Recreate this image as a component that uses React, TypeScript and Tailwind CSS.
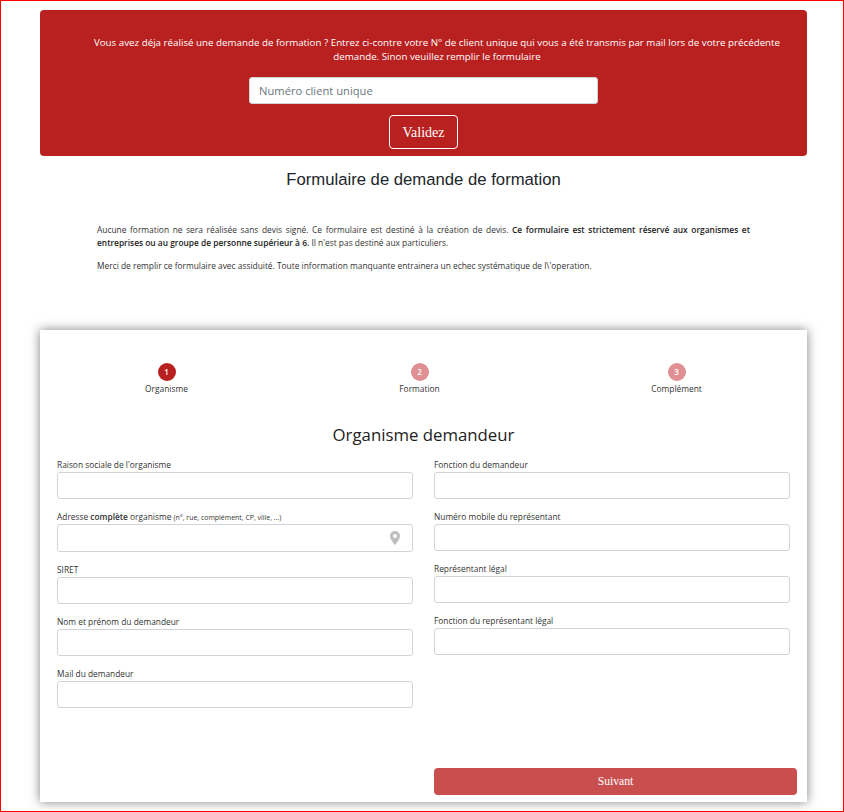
const OPEN = "font-['Open_Sans',sans-serif]"

function Field({ label, pin, tall }: { label: React.ReactNode; pin?: boolean; tall?: boolean }) {
  return (
    <div className="flex flex-col">
      <label className="block h-[14px] text-[8.350px] leading-[14px] text-[#333]">{label}</label>
      <div className="relative">
        <input className={`block w-full rounded-[3px] border border-[#ced4da] bg-white ${tall ? 'h-[28px]' : 'h-[27px]'}`} />
        {pin && (
          <svg viewBox="0 0 24 24" className="absolute right-[11px] top-[7px] h-[14px] w-[14px] text-[#bdbdbd]" fill="currentColor">
            <path fillRule="evenodd" d="M12 0C7 0 3.5 3.8 3.5 8.5 3.5 14.500 12 24 12 24s8.500-9.500 8.500-15.500C20.500 3.800 17 0 12 0zm0 12a3.500 3.500 0 1 1 0-7 3.500 3.500 0 0 1 0 7z" />
          </svg>
        )}
      </div>
    </div>
  )
}

function Step({ n, label, active }: { n: number; label: string; active?: boolean }) {
  return (
    <div className="flex flex-col items-center">
      <div className={`flex h-[18px] w-[18px] items-center justify-center rounded-full text-[8px] font-semibold text-white ${active ? 'bg-[#b92020]' : 'bg-[#e09093]'}`}>
        {n}
      </div>
      <span className="mt-[1px] text-[8.400px] leading-[14px] text-[#333]">{label}</span>
    </div>
  )
}

export default function App() {
  return (
    <div className={`h-[812px] w-[844px] overflow-hidden border border-[#ff0000] bg-white ${OPEN}`}>
      {/* Client number banner */}
      <div className="ml-[39px] mr-[36px] mt-[9px] flex h-[146px] flex-col items-center rounded-[4px] bg-[#b92020] pt-[26px]">
        <p className="ml-[27px] w-[700px] text-center text-[9.770px] leading-[14px] text-white">
          Vous avez déja réalisé une demande de formation ? Entrez ci-contre votre N° de client unique qui vous a été transmis par mail lors de votre précédente demande. Sinon veuillez remplir le formulaire
        </p>
        <input
          placeholder="Numéro client unique"
          className="mt-[13px] h-[27px] w-[349px] rounded-[3px] border border-[#ced4da] bg-white px-[9px] text-[11.200px] placeholder:text-[#6c757d]"
        />
        <button className="mt-[11px] h-[34px] w-[69px] rounded-[4px] border border-white font-['Liberation_Serif',serif] text-[14px] text-white">
          Validez
        </button>
      </div>

      <h1 className="mt-[14px] pl-[3px] text-center font-['Liberation_Sans',sans-serif] text-[16.700px] leading-[20px] text-[#212529]">
        Formulaire de demande de formation
      </h1>

      {/* Intro */}
      <div className="ml-[96px] mt-[33px] w-[653px] text-[8.380px] leading-[13px] text-[#333]">
        <p className="text-justify">
          Aucune formation ne sera réalisée sans devis signé. Ce formulaire est destiné à la création de devis. <b className="font-semibold text-[#222]">Ce formulaire est strictement réservé aux organismes et entreprises ou au groupe de personne supérieur à 6.</b> Il n'est pas destiné aux particuliers.
        </p>
        <p className="mt-[10px]">
          Merci de remplir ce formulaire avec assiduité. Toute information manquante entrainera un echec systématique de l\'operation.
        </p>
      </div>

      {/* Form card */}
      <div className="ml-[39px] mr-[36px] mt-[58px] h-[472px] bg-white shadow-[0_0_10px_rgba(0,0,0,0.5)]">
        <div className="grid grid-cols-[253px_253px_261px] pt-[33px]">
          <Step n={1} label="Organisme" active />
          <Step n={2} label="Formation" />
          <Step n={3} label="Complément" />
        </div>
        <h2 className="mt-[27px] text-center text-[16.800px] leading-[24px] text-[#222]">Organisme demandeur</h2>
        <div className="mt-[11px] grid grid-cols-[356px_356px] gap-x-[21px] px-[17px]">
          <div className="flex flex-col gap-[11px]">
            <Field label="Raison sociale de l'organisme" />
            <Field
              pin
              tall
              label={
                <>
                  Adresse <span className="font-semibold">complète</span> organisme <span className="text-[6.950px]">(n°, rue, complément, CP, ville, ...)</span>
                </>
              }
            />
            <Field label="SIRET" />
            <Field label="Nom et prénom du demandeur" />
            <Field label="Mail du demandeur" />
          </div>
          <div className="flex flex-col gap-[11px]">
            <Field label="Fonction du demandeur" />
            <Field label="Numéro mobile du représentant" />
            <Field label="Représentant légal" />
            <Field label="Fonction du représentant légal" />
          </div>
        </div>
        <div className="mt-[60px] flex justify-end pr-[10px]">
          <button className="h-[27px] w-[363px] rounded-[4px] bg-[#c94f4f] pt-[1px] font-['Liberation_Serif',serif] text-[11.700px] text-white">
            Suivant
          </button>
        </div>
      </div>
    </div>
  )
}
